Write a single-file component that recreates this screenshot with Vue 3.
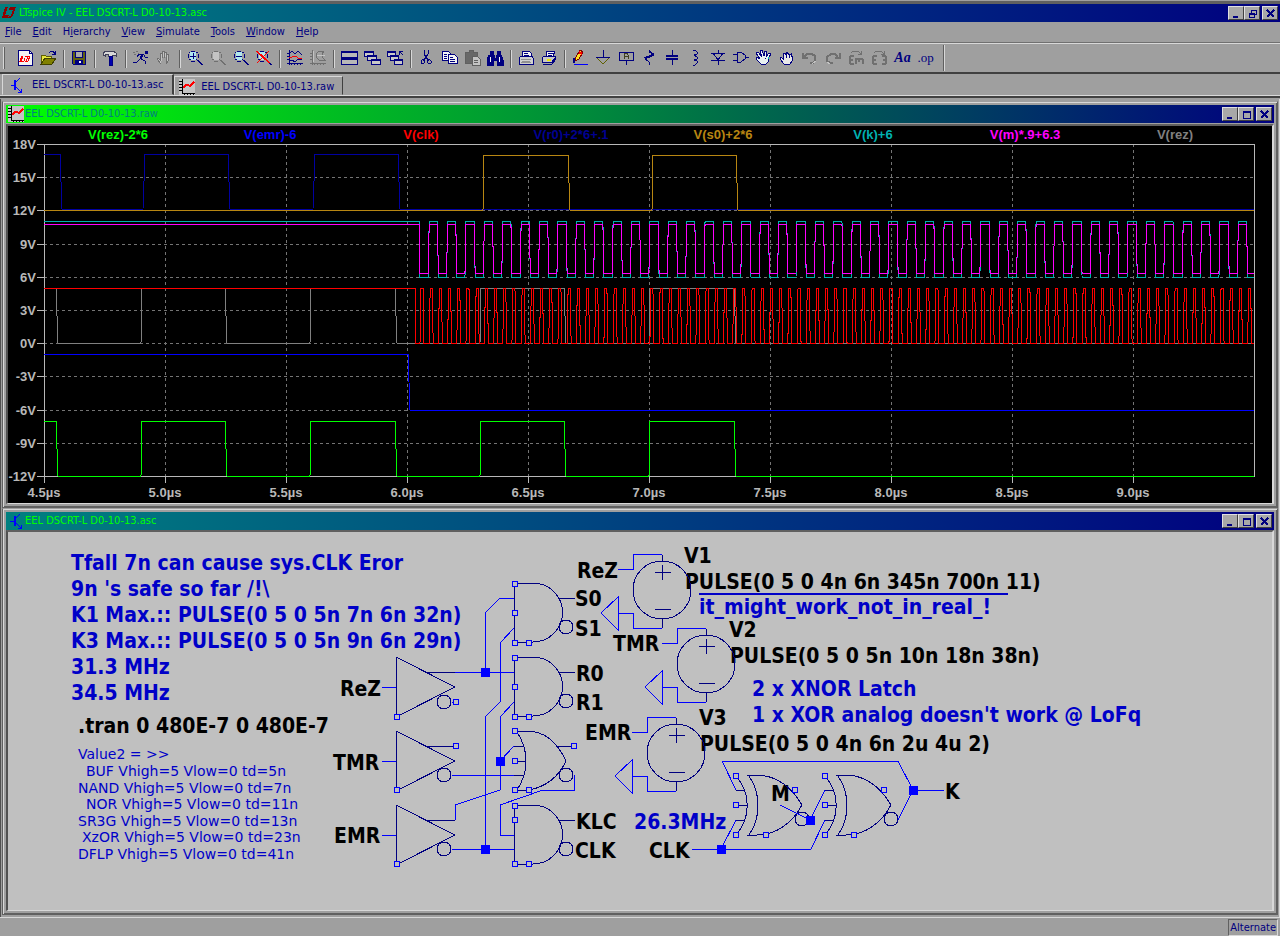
<script setup>
const N = '#000080'
const G = '#707070'
const L = '#c4c4c4'
const W = '#f4f4f4'

const doc = 'M1 0H12L15 3V15H1Z'
const lens = 'M4 1H8M2 3V2H3M1 4V8M2 9H3V10M4 11H8M9 10V9H10M11 8V4M10 3V2H9M10 10L15 15M11 10L16 15'

const menus = [
  ['F', 'ile'], ['E', 'dit'], ['H', 'ierarchy', 1], ['V', 'iew'],
  ['S', 'imulate'], ['T', 'ools'], ['W', 'indow'], ['H', 'elp']
]

const groups = [
  [
    { t: 'New schematic', p: [[doc, N, W], ['M12 0V3H15', N, 'none'], ['M5 6L3 11H7L8 8M8 6H13L11 11H9L11 7M4 11L6 6', '#f00', 'none']] },
    { t: 'Open', p: [['M1 14V5H5L6 6H11V8', '#606000', '#e8e840'], ['M1 14L5 8H16L12 14Z', '#404000', '#808000'], ['M9 3L11 1H13L15 4M15 1V4H12', N, 'none']] }
  ],
  [{ t: 'Save', p: [['M1 1H14V14H2L1 13Z', N, '#606010'], ['M4 1H11V7H4Z', N, '#a8a8a8'], ['M4 10H11V14H4Z', N, N], ['M9 11V13', W, 'none', 2]] }],
  [{ t: 'Control panel', p: [['M1 5V3L4 1H11L14 3V6L12 5H10V6H6V4H3V6Z', '#404058', '#d8d8d8'], ['M7 6H10V15H7Z', N, '#0000b0']] }],
  [
    { t: 'Run', p: [['M12 1H14V3H12Z', N, N], ['M11 4H6L4 7M10 4L8 9L12 11V14M9 4L7 9L4 12H0M11 5L12 7H15M8 5V9', N, 'none'], ['M0 2H2M3 1H5M1 4H3M5 3H6', G, 'none']] },
    { t: 'Halt', p: [['M5 14L1 9L2 8L4 10V3H6V8M6 3V1H8V8M8 2H10V8M10 4H12V11L10 14Z', '#707070', L]] }
  ],
  [
    { t: 'Zoom in', p: [['M3 2H9V10H3Z', 'none', '#b0e8f0'], [lens, N, 'none'], ['M3 6H9M6 3V9', N, 'none']] },
    { t: 'Pan', p: [['M3 2H9V10H3Z', 'none', L], [lens, G, 'none']] },
    { t: 'Zoom out', p: [['M3 2H9V10H3Z', 'none', '#b0e8f0'], [lens, N, 'none'], ['M3 6H9', N, 'none']] },
    { t: 'Zoom full extents', p: [['M3 2H9V10H3Z', 'none', '#b0e8f0'], [lens, N, 'none'], ['M0 1L13 13M13 1L1 13M1 1L14 13', '#f00', 'none']] }
  ],
  [
    { t: 'Autorange', p: [['M2 0V15M0 13H16M4 13V15M7 13V15M10 13V15M13 13V15M0 3H2M0 6H2M0 9H2', N, 'none'], ['M2 4L5 1L8 4L11 1L15 5M2 10H5L8 12L11 9L15 10', N, 'none'], ['M2 7H5L7 6H9L11 8H15', '#f00', 'none']] },
    { t: 'Autorange off', p: [['M2 0V15M0 13H16M4 13V15M7 13V15M10 13V15M13 13V15M0 3H2M0 6H2M0 9H2', G, 'none'], ['M6 4L9 1H14L12 4V7L15 10H9L6 7Z', G, 'none'], ['M3 1V12M7 5H15', L, 'none']] }
  ],
  [
    { t: 'Tile windows', p: [['M0 1H16V7H0ZM0 8H16V14H0Z', N, '#b8b8b8'], ['M0 2H16M0 9H16', N, 'none', 2]] },
    { t: 'Cascade windows', p: [['M0 1H9V6H0ZM3 5H12V10H3ZM7 9H16V14H7Z', N, '#c8c8c8'], ['M0 2H9M3 6H12M7 10H16', N, 'none', 2]] },
    { t: 'Close all windows', p: [['M0 1H8V6H0ZM3 5H11V10H3ZM7 9H15V14H7Z', N, '#c8c8c8'], ['M0 2H8M3 6H11M7 10H15', N, 'none', 2], ['M12 5V1H16M12 1L16 5', N, 'none']] }
  ],
  [
    { t: 'Cut', p: [['M6 0V4L10 10M10 0V4L6 10', N, 'none'], ['M5 9L3 11V13L5 14L7 12ZM11 9L13 11V13L11 14L9 12Z', N, 'none']] },
    { t: 'Copy', p: [['M1 1H7L9 3V10H1Z', N, W], ['M7 4H13L16 7V13H7Z', N, W], ['M3 4H6M3 6H6M3 8H6M9 7H12M9 9H14M9 11H14', N, 'none']] },
    { t: 'Paste', p: [['M1 2H5V0H9V2H13V13H1Z', '#606060', '#686868'], ['M8 6H13L16 9V15H8Z', '#606060', L], ['M10 10H14M10 12H14', '#606060', 'none']] },
    { t: 'Find', p: [['M3 1H6V4H3ZM10 1H13V4H10ZM2 5H7V8H9V5H14L16 10V15H10V10H6V15H0V10Z', N, N], ['M3 7V12M12 7V12', W, 'none']] }
  ],
  [
    { t: 'Print setup', p: [['M4 7V2L5 1H11L13 3V7', N, W], ['M1 8L3 6H14L15 8V14H1Z', N, '#d0d0d0'], ['M3 9H13M4 11H12M3 12H13', '#909090', 'none'], ['M6 3H10M6 5H11', N, 'none']] },
    { t: 'Print', p: [['M5 6L6 1H14L12 6', N, W], ['M1 8L3 6H15L13 12H1Z', N, '#c8c8c8'], ['M1 12H11L14 8M2 14H11L15 9', N, 'none'], ['M6 10H10', '#e8e800', 'none', 2], ['M7 3H12M7 5H11', N, 'none']] }
  ],
  [
    { t: 'Wire', p: [['M3 11L4 7L8 0L11 2L7 9Z', '#800000', '#ffe020'], ['M7 2L10 4', '#f00', 'none', 2], ['M2 8V13', N, 'none', 2], ['M2 14H16', '#00f', 'none']] },
    { t: 'Ground', p: [['M8 0V7', N, 'none'], ['M1 7H15L8 14Z', '#606000', 'none'], ['M1 7H15', N, 'none']] },
    { t: 'Label net', p: [['M1 2H15V10H1Z', N, 'none'], ['M8 10V15', N, 'none'], ['M6 9V5L7 3H9L10 5V9M6 6H10', '#404020', 'none']] },
    { t: 'Resistor', p: [['M8 0V2L13 5L4 9L8 12V15M8 1L13 4L3 8', N, 'none']] },
    { t: 'Capacitor', p: [['M8 0V6M8 9V15', N, 'none'], ['M2 6H14M2 9H14', N, 'none', 2]] },
    { t: 'Inductor', p: [['M6 0H8L10 2V4L7 5L10 7V9L7 10L10 11V13L8 15H6', N, 'none']] },
    { t: 'Diode', p: [['M8 0V3M8 10V15M1 3H15M3 3L8 10L13 3M1 10H15', N, 'none']] },
    { t: 'Component', p: [['M0 4H4M0 10H4M12 7H16M4 2V12H8L12 9V5L8 2Z', N, 'none']] },
    { t: 'Move', p: [['M5 14L0 9L1 7L4 9L0 3L2 2L6 7L4 1L6 0L8 6V1H10V7L13 3L15 4L12 9V12L10 14Z', N, '#e8f0f0'], ['M12 7L13 9', '#00c0c0', 'none']] },
    { t: 'Drag', p: [['M5 14L1 9L2 7L4 9V4L6 3L7 5L8 2L10 5L12 4V6L14 6L13 11L11 14Z', N, '#e8e8e8'], ['M7 5V8M10 5V8', N, 'none']] },
    { t: 'Undo', p: [['M2 7L5 4H10L13 6V11L11 13H8M1 3V8H6', G, 'none', 2], ['M10 14L14 11', L, 'none']] },
    { t: 'Redo', p: [['M13 7L10 4H6L2 7V11L5 13H8M15 3V8H10', G, 'none', 2], ['M5 14L2 12', L, 'none']] },
    { t: 'Rotate', p: [['M2 6V14M2 6H6M2 10H5M2 14H6M8 14V9H15M11 9V12M15 9V14', G, 'none', 2], ['M3 3L5 1H10L13 4M13 1V4H10', G, 'none']] },
    { t: 'Mirror', p: [['M2 6V14M2 6H6M2 10H5M2 14H6M15 6V14M11 6H15M12 10H15M11 14H15', G, 'none', 2], ['M3 3L5 1H10L13 4M13 1V4H10', G, 'none']] },
    { t: 'Text', label: 'Aa', cls: 'aa' },
    { t: 'SPICE directive', label: '.op', cls: 'op' }
  ]
]

/* waveform pane */
const X0 = 44
const X1 = 1254
const volts = [18, 15, 12, 9, 6, 3, 0, -3, -6, -9, -12]
const vy = v => Math.round(144 + (18 - v) * 332 / 30)
const times = ['4.5', '5.0', '5.5', '6.0', '6.5', '7.0', '7.5', '8.0', '8.5', '9.0']
const tx = i => X0 + i * 121

const legend = [
  ['V(rez)-2*6', 118, '#00ff00'], ['V(emr)-6', 270, '#0000ff'], ['V(clk)', 421, '#ff0000'],
  ['V(r0)+2*6+.1', 571, '#000090'], ['V(s0)+2*6', 723, '#b88612'], ['V(k)+6', 873, '#00b0b0'],
  ['V(m)*.9+6.3', 1025, '#ff00ff'], ['V(rez)', 1175, '#808080']
]

function wave(start, edges, hi, lo, rise, fall) {
  let level = start
  let d = `M${X0} ${level ? hi : lo}`
  for (const e of edges) {
    if (e >= X1) break
    d += `H${e}L${Math.min(e + (level ? fall : rise), X1)} ${level ? lo : hi}`
    level = !level
  }
  return d + `H${X1}`
}
const pulses = (first, width, period) => {
  const out = [415]
  for (let x = first; x < X1; x += period) out.push(x, x + width)
  return out
}
const half = []
for (let x = 419; x < X1; x += 18.39) half.push(x, x + 9.2)
const rez = [56, 141, 225, 310, 395, 480, 564, 649, 734]
const traces = [
  ['#808080', wave(1, rez, 288, 343, 1, 2)],
  ['#00b0b0', wave(1, half, 221, 277, 1, 1)],
  ['#ff00ff', wave(1, half, 224, 273, 1, 1)],
  ['#0000a0', wave(1, [60, 143, 228, 313, 398], 154, 209, 2, 2)],
  ['#b88612', wave(0, [483, 568, 652, 736], 155, 210, 1, 2)],
  ['#ff0000', wave(1, pulses(420, 3, 9.196), 288, 343, 1, 1)],
  ['#0000ff', wave(1, [408], 354, 410, 1, 2)],
  ['#00ff00', wave(1, rez, 421, 476, 1, 2)]
]

/* schematic pane */
const sources = [[0, 0], [44, 74], [14, 163]]
const buffers = [0, 74, 148]
const ands = [0, 74, 222]
const xors = [0, 89]
const bubbles = [
  [444, 702], [444, 775], [444, 849], [566, 627], [566, 701], [566, 775], [566, 849], [802, 819], [891, 819]
]
const nodes = [[485, 672], [500, 761], [485, 849], [721, 849], [810, 820], [913, 790]]
const pins = [
  [397, 717], [397, 790], [397, 864], [456, 702], [456, 746],
  [515, 584], [515, 613], [515, 643], [529, 643],
  [515, 658], [515, 687], [515, 717], [529, 717],
  [515, 731], [515, 761], [515, 790], [529, 790], [574, 746],
  [515, 806], [515, 820], [515, 864], [529, 864],
  [736, 776], [736, 805], [736, 835], [766, 835], [795, 790],
  [825, 776], [825, 805], [825, 835], [854, 835], [884, 790]
]
const wires = [
  'M382 687H396M382 761H396M382 835H396',
  'M455 672H514M485 672V613L500 598H514',
  'M485 849V717L500 702V643L514 628',
  'M455 820V805L500 790V717L514 702M500 761L514 746',
  'M574 775V790H543L500 805V835H514',
  'M452 775H514M452 849H514M452 702H454',
  'M692 849H811L825 820M721 849L736 820M780 805L810 820L825 790',
  'M736 790L722 761H898L913 790H944M913 790L898 820'
]
const labels = [
  ['ReZ', 340, 696], ['TMR', 333, 770], ['EMR', 334, 843],
  ['S0', 575, 606], ['S1', 575, 636], ['R0', 576, 681], ['R1', 576, 710],
  ['KLC', 576, 829], ['CLK', 575, 858],
  ['ReZ', 577, 578], ['TMR', 613, 651], ['EMR', 585, 740],
  ['V1', 684, 563], ['PULSE(0 5 0 4n 6n 345n 700n 11)', 685, 589],
  ['V2', 729, 637], ['PULSE(0 5 0 5n 10n 18n 38n)', 730, 663],
  ['V3', 699, 725], ['PULSE(0 5 0 4n 6n 2u 4u 2)', 700, 751],
  ['M', 771, 801], ['K', 945, 799], ['CLK', 649, 858],
  ['.tran 0 480E-7 0 480E-7', 78, 733]
]
const notes = [
  ['Tfall 7n can cause sys.CLK Eror', 71, 570], ["9n 's safe so far /!\\", 71, 596],
  ['K1 Max.:: PULSE(0 5 0 5n 7n 6n 32n)', 71, 622], ['K3 Max.:: PULSE(0 5 0 5n 9n 6n 29n)', 71, 648],
  ['31.3 MHz', 71, 674], ['34.5 MHz', 71, 700],
  ['it_might_work_not_in_real_!', 699, 614], ['2 x XNOR Latch', 752, 696],
  ["1 x XOR analog doesn't work @ LoFq", 752, 722], ['26.3MHz', 634, 829]
]
const params = [
  ['Value2 = >>', 78, 759], ['BUF Vhigh=5 Vlow=0 td=5n', 86, 776], ['NAND Vhigh=5 Vlow=0 td=7n', 78, 793],
  ['NOR Vhigh=5 Vlow=0 td=11n', 86, 809], ['SR3G Vhigh=5 Vlow=0 td=13n', 78, 826],
  ['XzOR Vhigh=5 Vlow=0 td=23n', 82, 842], ['DFLP Vhigh=5 Vlow=0 td=41n', 78, 859]
]
</script>

<template>
  <div class="app">
    <header class="titlebar main-title">
      <svg class="logo" width="14" height="12" viewBox="0 0 14 12" aria-hidden="true">
        <path d="M3 0H6L3 8H7L6 11H0ZM8 0H14L11 9L8 11H6L7 9H9L11 3H7Z" fill="#900000" />
      </svg>
      <h1>LTspice IV - EEL DSCRT-L D0-10-13.asc</h1>
      <div class="winbtns">
        <button type="button" aria-label="Minimize"><svg width="9" height="9"><path d="M1 8H6" stroke-width="2" /></svg></button>
        <button type="button" aria-label="Restore"><svg width="9" height="9"><path d="M3 4V1H8V5H6M3 1H9M1 4H6V8H1ZM1 5H6" /></svg></button>
        <button type="button" class="close" aria-label="Close"><svg width="9" height="9"><path d="M1 1L8 8M8 1L1 8" stroke-width="2" /></svg></button>
      </div>
    </header>

    <nav class="menubar">
      <button v-for="m in menus" :key="m[0] + m[1]" type="button"><template v-if="m[2]">H<u>i</u>erarchy</template><template v-else><u>{{ m[0] }}</u>{{ m[1] }}</template></button>
    </nav>

    <div class="toolbar" role="toolbar" aria-label="Tools">
      <div v-for="(g, i) in groups" :key="i" class="group">
        <button v-for="b in g" :key="b.t" type="button" :aria-label="b.t">
          <span v-if="b.label" :class="b.cls">{{ b.label }}</span>
          <svg v-else width="17" height="16" viewBox="0 0 17 16" aria-hidden="true">
            <path v-for="(p, k) in b.p" :key="k" :d="p[0]" :stroke="p[1]" :fill="p[2]" :stroke-width="p[3] || 1" />
          </svg>
        </button>
      </div>
    </div>

    <div class="tabs" role="tablist">
      <button type="button" role="tab" aria-selected="true" class="tab active">
        <svg width="16" height="16" viewBox="0 0 16 16" aria-hidden="true"><path d="M1 8H5M10 1L6 5M6 10L11 15M11 12V15H8" stroke="#00f" fill="none" /><path d="M5 3V13" stroke="#00f" stroke-width="2" /></svg>
        <span>EEL DSCRT-L D0-10-13.asc</span>
      </button>
      <button type="button" role="tab" aria-selected="false" class="tab">
        <svg width="16" height="16" viewBox="0 0 16 16" aria-hidden="true"><path d="M0 0H16V16H0Z" fill="#c4c4c4" /><path d="M3 0V14H16M0 2H3M0 5H3M0 8H3M0 11H3M5 14V16M8 14V16M11 14V16M14 14V16" stroke="#000" fill="none" /><path d="M4 9L7 6H9L11 7L15 3" stroke="#f00" stroke-width="2" fill="none" /></svg>
        <span>EEL DSCRT-L D0-10-13.raw</span>
      </button>
    </div>

    <main class="mdi">
      <section class="window">
        <header class="titlebar raw-title">
          <svg width="16" height="16" viewBox="0 0 16 16" aria-hidden="true"><path d="M0 0H16V16H0Z" fill="#c4c4c4" /><path d="M3 0V14H16M0 2H3M0 5H3M0 8H3M0 11H3M5 14V16M8 14V16M11 14V16M14 14V16" stroke="#000" fill="none" /><path d="M4 9L7 6H9L11 7L15 3" stroke="#f00" stroke-width="2" fill="none" /></svg>
          <h2>EEL DSCRT-L D0-10-13.raw</h2>
          <div class="winbtns">
            <button type="button" aria-label="Minimize"><svg width="9" height="9"><path d="M1 8H6" stroke-width="2" /></svg></button>
            <button type="button" aria-label="Maximize"><svg width="9" height="9"><path d="M1 1H8V8H1ZM1 2H8" /></svg></button>
            <button type="button" class="close" aria-label="Close"><svg width="9" height="9"><path d="M1 1L8 8M8 1L1 8" stroke-width="2" /></svg></button>
          </div>
        </header>
        <div class="client">
          <svg class="plot" viewBox="8 126 1264 377" role="img" aria-label="Waveforms">
            <g class="grid">
              <path v-for="v in volts.slice(1, -1)" :key="v" :d="`M44 ${vy(v)}H1254`" />
              <path v-for="i in 9" :key="i" :d="`M${tx(i)} 144V476`" />
            </g>
            <path class="axis" d="M44 144H1254V476H44Z" />
            <path v-for="v in volts" :key="'t' + v" class="axis" :d="`M37 ${vy(v)}H44`" />
            <path v-for="(t, i) in times" :key="'u' + t" class="axis" :d="`M${tx(i)} 476V483`" />
            <path v-for="(t, i) in traces" :key="'w' + i" class="trace" :stroke="t[0]" :d="t[1]" />
            <g class="legend">
              <text v-for="l in legend" :key="l[0]" :x="l[1]" y="139" :fill="l[2]">{{ l[0] }}</text>
            </g>
            <g class="scale">
              <text v-for="v in volts" :key="v" x="36" :y="vy(v) + 5" text-anchor="end">{{ v }}V</text>
              <text v-for="(t, i) in times" :key="t" :x="tx(i)" y="497" text-anchor="middle">{{ t }}µs</text>
            </g>
          </svg>
        </div>
      </section>

      <section class="window">
        <header class="titlebar">
          <svg width="16" height="16" viewBox="0 0 16 16" aria-hidden="true"><path d="M2 8H6M12 1L8 5M8 10L13 15M13 12V15H10" stroke="#00f" fill="none" /><path d="M7 3V13" stroke="#00f" stroke-width="2" /></svg>
          <h2>EEL DSCRT-L D0-10-13.asc</h2>
          <div class="winbtns">
            <button type="button" aria-label="Minimize"><svg width="9" height="9"><path d="M1 8H6" stroke-width="2" /></svg></button>
            <button type="button" aria-label="Maximize"><svg width="9" height="9"><path d="M1 1H8V8H1ZM1 2H8" /></svg></button>
            <button type="button" class="close" aria-label="Close"><svg width="9" height="9"><path d="M1 1L8 8M8 1L1 8" stroke-width="2" /></svg></button>
          </div>
        </header>
        <div class="client sheet">
          <svg class="schematic" viewBox="8 532 1264 378" role="img" aria-label="Schematic">
            <g class="label">
              <text v-for="(l, i) in labels" :key="i" :x="l[1]" :y="l[2]">{{ l[0] }}</text>
            </g>
            <g class="note">
              <text v-for="l in notes" :key="l[0]" :x="l[1]" :y="l[2]">{{ l[0] }}</text>
            </g>
            <g class="param">
              <text v-for="l in params" :key="l[0]" :x="l[1]" :y="l[2]">{{ l[0] }}</text>
            </g>
            <path class="rule" d="M699 594H1008" />
            <g class="symbol">
              <path v-for="y in buffers" :key="'b' + y" :transform="`translate(0 ${y})`" d="M396 657L455 687L396 717ZM426 672H455" />
              <path v-for="y in ands" :key="'a' + y" :transform="`translate(0 ${y})`" d="M514 583H533A29 29 0 0 1 533 642H514ZM559 598H575" />
              <path d="M514 731H527C545 731 558 744 566 761C558 778 545 787 529 790H514M517 732C529 750 529 772 517 790M515 761H526M514 746H523M514 775H523M556 746H574" />
              <g v-for="x in xors" :key="'x' + x" :transform="`translate(${x} 0)`">
                <path d="M736 776C751 793 751 818 736 835M749 776C761 793 761 818 749 835M747 775H758C778 776 792 788 802 805C792 824 775 835 757 835H747M736 805H747M736 790H744M736 820H744" />
              </g>
              <g v-for="s in sources" :key="'s' + s[0]" :transform="`translate(${s[0]} ${s[1]})`">
                <circle cx="662" cy="590" r="29" />
                <path d="M655 572H671M662 565V580M655 609H671M662 561V555M662 619V628" />
              </g>
              <circle v-for="b in bubbles" :key="b[0] + '-' + b[1]" :cx="b[0]" :cy="b[1]" r="7" />
            </g>
            <g class="wire">
              <path v-for="w in wires" :key="w" :d="w" />
              <path v-for="s in sources" :key="'w' + s[0]" :transform="`translate(${s[0]} ${s[1]})`" d="M662 554H633V569H618M662 628H633V613H618M618 597V630L601 613Z" />
            </g>
            <rect v-for="p in pins" :key="'p' + p" class="pin" :x="p[0] - 3" :y="p[1] - 3" width="5" height="5" />
            <rect v-for="n in nodes" :key="'n' + n" class="node" :x="n[0] - 4" :y="n[1] - 4" width="9" height="9" />
          </svg>
        </div>
      </section>
    </main>

    <footer class="status"><span>Alternate</span></footer>
  </div>
</template>

<style>
body {
  margin: 0;
  background: #9f9f9f;
}
</style>

<style scoped>
.app {
  min-height: 100vh;
  box-sizing: border-box;
  display: flex;
  flex-direction: column;
  background: #9f9f9f;
  color: #000080;
  font: 11px/14px "DejaVu Sans Condensed", "DejaVu Sans", sans-serif;
}
button {
  font: inherit;
  color: inherit;
  background: none;
  border: 0;
  padding: 0;
  margin: 0;
}
svg {
  display: block;
  shape-rendering: crispEdges;
}
.titlebar {
  display: flex;
  align-items: center;
  height: 18px;
  background: linear-gradient(90deg, #008080, #000080);
  color: #00ff00;
}
.titlebar h1,
.titlebar h2 {
  flex: 1;
  margin: 0;
  font: inherit;
}
.titlebar h1 {
  margin-left: 3px;
}
.titlebar h2 {
  margin-left: 1px;
}
.window .titlebar {
  padding-left: 2px;
}
.main-title {
  margin-top: 1px;
  border-top: 3px solid #606060;
  box-shadow: 0 -1px 0 #9f9f9f;
}
.logo {
  margin-left: 2px;
}
.raw-title {
  background: linear-gradient(90deg, #00ff00, #000080);
  color: #008080;
}
.winbtns {
  display: flex;
  padding-right: 2px;
}
.winbtns button {
  box-sizing: border-box;
  width: 16px;
  height: 14px;
  display: grid;
  place-items: center;
  background: #a8a8a8;
  border: 1px solid;
  border-color: #e0e0e0 #404040 #404040 #e0e0e0;
}
.winbtns .close {
  margin-left: 2px;
}
.winbtns path {
  fill: none;
  stroke: #000080;
}
.menubar {
  display: flex;
  height: 20px;
  border-bottom: 1px solid #707070;
}
.menubar button {
  padding: 0 6px 0 5px;
}
.toolbar {
  display: flex;
  align-self: flex-start;
  min-width: 100%;
  box-sizing: border-box;
  height: 31px;
  padding: 1px 0 1px 10px;
  border-top: 1px solid #d8d8d8;
  border-bottom: 2px solid #404040;
  position: relative;
}
.toolbar::before {
  content: "";
  position: absolute;
  left: 3px;
  top: 3px;
  width: 1px;
  height: 22px;
  border-right: 1px solid #606060;
  background: #d8d8d8;
}
.group {
  display: flex;
  align-items: center;
  padding: 0 4px;
  position: relative;
}
.group:not(:last-child)::after {
  content: "";
  position: absolute;
  right: -1px;
  top: 5px;
  width: 1px;
  height: 18px;
  background: #606060;
  border-right: 1px solid #d8d8d8;
}
.group:last-child {
  padding-right: 6px;
  border-right: 1px solid #606060;
  box-shadow: 1px 0 0 #d8d8d8;
}
.group button {
  width: 23px;
  height: 23px;
  display: grid;
  place-items: center;
}
.aa {
  font: italic bold 14px/16px "Liberation Serif", serif;
}
.op {
  font: 13px/16px "Liberation Serif", serif;
}
.tabs {
  display: flex;
  align-items: flex-end;
  height: 21px;
  padding-left: 2px;
  border-bottom: 1px solid #d8d8d8;
  box-shadow: 0 2px 0 #404040;
}
.tab {
  display: flex;
  align-items: center;
  height: 19px;
  padding: 2px 8px 0 4px;
  gap: 6px;
  border: 1px solid;
  border-color: #d8d8d8 #404040 transparent #d8d8d8;
}
.tab.active {
  height: 21px;
  padding: 0 9px 0 7px;
  border-right-width: 2px;
}
.mdi {
  flex: 1;
  margin-top: 3px;
  padding: 2px 2px 0;
  border-bottom: 1px solid #d8d8d8;
  box-shadow: inset 1px 0 0 #505050, inset -1px 0 0 #d8d8d8;
}
.window {
  border: 1px solid #606060;
  border-top-color: #9f9f9f;
  box-shadow: inset 1px 1px 0 #d8d8d8, inset -1px -1px 0 #606060;
  padding: 3px;
}
.client {
  background: #000;
  border: 2px solid;
  border-color: #606060 #d8d8d8 #d8d8d8 #505050;
  border-bottom-width: 1px;
  margin-top: 1px;
}
.sheet {
  background: #c0c0c0;
  margin-top: 0;
}
.client svg {
  width: 100%;
  height: auto;
}
.grid path {
  stroke: #747474;
  stroke-dasharray: 3 3;
}
.axis {
  stroke: #b8b8b8;
  fill: none;
}
.trace {
  fill: none;
}
.legend text {
  font: bold 13px "Liberation Sans", sans-serif;
  text-anchor: middle;
}
.scale text {
  font: bold 13px "Liberation Sans", sans-serif;
  fill: #b8b8b8;
}
.label text {
  font: bold 21px "DejaVu Sans Condensed", "DejaVu Sans", sans-serif;
  fill: #000;
}
.note text {
  font: bold 21px "DejaVu Sans Condensed", "DejaVu Sans", sans-serif;
  fill: #0000c8;
}
.param text {
  font: 14px "DejaVu Sans", sans-serif;
  fill: #0000c8;
}
.rule {
  stroke: #0000c8;
  stroke-width: 2;
}
.symbol path,
.symbol circle {
  fill: none;
  stroke: #000080;
}
.wire path {
  fill: none;
  stroke: #0000ff;
}
.pin {
  fill: #c0c0c0;
  stroke: #0000ff;
}
.node {
  fill: #0000ff;
}
.status {
  display: flex;
  justify-content: flex-end;
  align-items: flex-end;
  height: 18px;
  padding: 0 2px 0;
}
.status span {
  padding: 0 1px;
  line-height: 15px;
  border: 1px solid;
  border-color: #606060 #d8d8d8 #d8d8d8 #606060;
}
</style>
